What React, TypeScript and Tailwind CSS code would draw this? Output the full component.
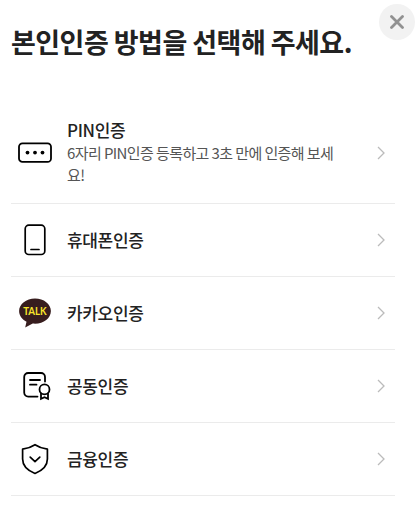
import type { ReactNode } from "react";

interface AuthMethod {
  id: string;
  label: string;
  description?: string;
  icon: ReactNode;
}

const PinIcon = () => (
  <svg width="36" height="36" viewBox="0 0 36 36" fill="none">
    <rect x="2" y="8.3" width="32" height="18.6" rx="3.5" stroke="#000" strokeWidth="1.8" />
    <circle cx="10.5" cy="17.6" r="1.9" fill="#000" />
    <circle cx="18" cy="17.6" r="1.9" fill="#000" />
    <circle cx="25.5" cy="17.6" r="1.9" fill="#000" />
  </svg>
);

const PhoneIcon = () => (
  <svg width="36" height="36" viewBox="0 0 36 36" fill="none" stroke="#000" strokeWidth="1.7" strokeLinecap="round">
    <rect x="8.2" y="3.2" width="19.6" height="29.3" rx="3.6" />
    <path d="M14 27.5h8" />
  </svg>
);

const TalkIcon = () => (
  <svg width="36" height="36" viewBox="0 0 36 36">
    <path
      d="M18 3.4C9.2 3.4 2.1 9 2.1 16c0 4.6 3 8.600 7.400 10.700L8.200 32.600l7.500-4c.8.100 1.500.1 2.300.1 8.800 0 15.900-5.600 15.900-12.700S26.800 3.400 18 3.400Z"
      fill="#371d1e"
    />
    <text
      x="18"
      y="20.100"
      textAnchor="middle"
      textLength="23.500"
      lengthAdjust="spacingAndGlyphs"
      fill="#f7e52b"
      className="font-['Lato',sans-serif] text-[11.2px] font-bold tracking-normal"
    >
      TALK
    </text>
  </svg>
);

const CertificateIcon = () => (
  <svg width="36" height="36" viewBox="0 0 36 36" fill="none" stroke="#000" strokeWidth="1.8" strokeLinecap="round">
    <path d="M28 13.500V9a4 4 0 0 0-4-4H11.200a4 4 0 0 0-4 4v15.600a4 4 0 0 0 4 4h9.300" />
    <path d="M13 12h10M13 16.700h6.500" />
    <circle cx="27.500" cy="21.400" r="5" />
    <path d="M24 25.500v5.400l3.500-1.600 3.500 1.600v-5.400" />
  </svg>
);

const ShieldIcon = () => (
  <svg width="36" height="36" viewBox="0 0 36 36" fill="none" stroke="#000" strokeWidth="1.7" strokeLinecap="round" strokeLinejoin="round">
    <path d="M18 3.700c3.500 2.300 7.500 3.800 12.400 4.500v9.800c0 6.500-4.900 11.500-12.400 14.500C10.500 29.500 5.600 24.500 5.600 18V8.200C10.500 7.500 14.500 6 18 3.700Z" />
    <path d="m13.200 16.200 4.800 4.500 4.800-4.500" />
  </svg>
);

const methods: AuthMethod[] = [
  {
    id: "pin",
    label: "PIN인증",
    description: "6자리 PIN인증 등록하고 3초 만에 인증해 보세요!",
    icon: <PinIcon />,
  },
  { id: "phone", label: "휴대폰인증", icon: <PhoneIcon /> },
  { id: "kakao", label: "카카오인증", icon: <TalkIcon /> },
  { id: "joint", label: "공동인증", icon: <CertificateIcon /> },
  { id: "finance", label: "금융인증", icon: <ShieldIcon /> },
];

export default function App() {
  return (
    <main className="relative h-[512px] w-[418px] overflow-hidden bg-white pt-[23px] pr-[23px] pl-[11px] font-['Noto_Sans_CJK_KR',sans-serif] text-[#222]">
      <button
        type="button"
        aria-label="닫기"
        className="absolute top-1 right-[3px] flex size-9 items-center justify-center rounded-full bg-[#f2f2f2]"
      >
        <svg width="14" height="14" viewBox="0 0 14 14" stroke="#919191" strokeWidth="2.8" strokeLinecap="round">
          <path d="m1.500 1.500 11 11M12.500 1.500l-11 11" />
        </svg>
      </button>

      <h1 className="h-[79px] text-[27px] leading-[38px] font-bold tracking-[-0.54px] whitespace-nowrap">
        본인인증 방법을 선택해 주세요.
      </h1>

      <ul>
        {methods.map((method) => (
          <li key={method.id} className="border-b border-[#ebebeb]">
            <button
              type="button"
              className={"flex w-full items-center pr-[9px] pl-1.5 text-left " + (method.description ? "h-[101px]" : "h-[72px]")}
            >
              <span className="size-9 shrink-0">{method.icon}</span>
              <span className="ml-3.5 w-[280px]">
                <span className="block text-[17px] leading-6 font-medium tracking-[-0.34px]">{method.label}</span>
                {method.description && (
                  <span className="block pb-0.5 text-[15px] leading-[22px] tracking-[-0.6px] break-all text-[#555]">
                    {method.description}
                  </span>
                )}
              </span>
              <svg className="ml-auto" width="10" height="14" viewBox="0 0 10 14" fill="none" stroke="#bbb" strokeWidth="1.3">
                <path d="m2 1 6 6-6 6" />
              </svg>
            </button>
          </li>
        ))}
      </ul>
    </main>
  );
}
